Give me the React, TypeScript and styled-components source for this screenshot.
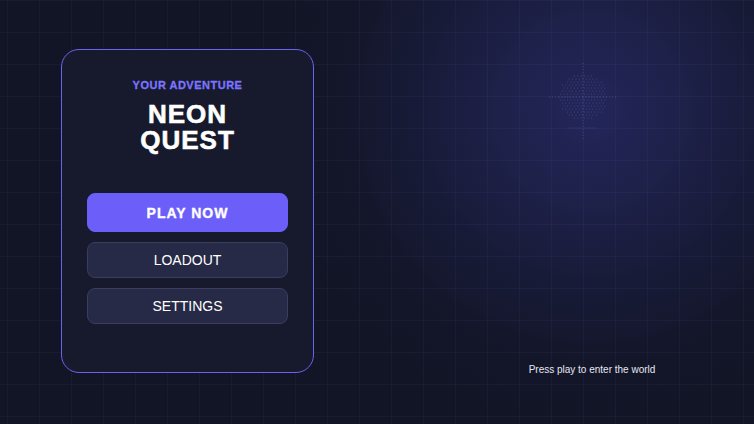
import React from 'react'
import styled, { createGlobalStyle } from 'styled-components'

const GlobalStyle = createGlobalStyle`
  * { box-sizing: border-box; }
  html, body {
    margin: 0;
    padding: 0;
    background: #121526;
  }
  body {
    font-family: "Liberation Sans", Arial, sans-serif;
    color: #ffffff;
  }
`

const Page = styled.div`
  width: 100%;
  height: 100vh;
  min-height: 424px;
  display: flex;
  align-items: flex-start;
  padding: 49px 0 0 61px;
  overflow: hidden;
  background-color: #121526;
  background-image:
    linear-gradient(to right, rgba(110, 110, 200, 0.07) 1px, transparent 1px),
    linear-gradient(to bottom, rgba(110, 110, 200, 0.07) 1px, transparent 1px),
    radial-gradient(circle at 590px 110px, #23265a 0px, #1e2149 90px, #181b38 170px, #131628 260px, #121526 340px);
  background-size: 32px 32px, 32px 32px, 100% 100%;
  background-position: 7px 0, 0 0, 0 0;
`

const Card = styled.section`
  width: 253px;
  height: 324px;
  flex-shrink: 0;
  display: flex;
  flex-direction: column;
  align-items: stretch;
  padding: 28px 25px 0;
  background: #161a2c;
  border: 1px solid #6a63f0;
  border-radius: 18px;
`

const Eyebrow = styled.div`
  text-align: center;
  font-size: 11px;
  line-height: 14px;
  font-weight: 700;
  letter-spacing: 0.5px;
  color: #7c74ff;
  -webkit-text-stroke: 0.3px #7c74ff;
`

const Title = styled.h1`
  margin: 9px 0 0;
  text-align: center;
  font-size: 26px;
  line-height: 26px;
  font-weight: 700;
  letter-spacing: 1px;
  color: #ffffff;
  -webkit-text-stroke: 0.6px #ffffff;
`

const Menu = styled.nav`
  display: flex;
  flex-direction: column;
  gap: 10px;
  margin-top: 40px;
`

const MenuButton = styled.button<{ $primary?: boolean }>`
  display: flex;
  align-items: center;
  justify-content: center;
  width: 100%;
  height: ${p => (p.$primary ? '39px' : '36px')};
  padding: 0;
  border-radius: 8px;
  border: 1px solid ${p => (p.$primary ? '#6c5ef9' : '#3a3d5e')};
  background: ${p => (p.$primary ? '#6c5ef9' : '#272a46')};
  color: #ffffff;
  font-family: "Liberation Sans", Arial, sans-serif;
  font-size: 14px;
  font-weight: ${p => (p.$primary ? 700 : 400)};
  letter-spacing: ${p => (p.$primary ? '1px' : '0')};
  -webkit-text-stroke: ${p => (p.$primary ? '0.35px #ffffff' : '0')};
  cursor: pointer;
`

const Stage = styled.div`
  flex: 1;
  height: 324px;
  display: flex;
  flex-direction: column;
  align-items: center;
  justify-content: space-between;
  padding-left: 116px;
`

const Globe = styled.svg`
  margin: 14px 18px 0 0;
  opacity: 0.3;
`

const Hint = styled.p`
  margin: 0 0 -3px;
  font-size: 10px;
  line-height: 12px;
  color: #e6e6f5;
`

// faint dotted sphere with a crosshair, sitting inside the glow
function DotGlobe() {
  const dots: React.ReactElement[] = []
  const r = 24
  let row = 0
  for (let y = -r; y <= r; y += 3, row++) {
    const shift = row % 2 ? 1.7 : 0
    for (let x = -r + shift; x <= r; x += 3.4) {
      if (x * x + y * y <= r * r) {
        dots.push(<circle key={`${row}-${x}`} cx={34 + x} cy={34 + y} r={0.55} fill="#9a9af0" />)
      }
    }
  }
  return (
    <Globe width={68} height={76} viewBox="0 0 68 76">
      {dots}
      <line x1={0} y1={34} x2={68} y2={34} stroke="#9a9af0" strokeWidth={0.8} strokeDasharray="1 2" />
      <line x1={34} y1={0} x2={34} y2={76} stroke="#9a9af0" strokeWidth={0.8} strokeDasharray="1 2" />
      <line x1={20} y1={65} x2={48} y2={65} stroke="#9a9af0" strokeWidth={0.8} strokeDasharray="1 1.5" />
    </Globe>
  )
}

export default function App() {
  return (
    <>
      <GlobalStyle />
      <Page>
        <Card>
          <Eyebrow>YOUR ADVENTURE</Eyebrow>
          <Title>NEON<br />QUEST</Title>
          <Menu>
            <MenuButton $primary>PLAY NOW</MenuButton>
            <MenuButton>LOADOUT</MenuButton>
            <MenuButton>SETTINGS</MenuButton>
          </Menu>
        </Card>
        <Stage>
          <DotGlobe />
          <Hint>Press play to enter the world</Hint>
        </Stage>
      </Page>
    </>
  )
}
